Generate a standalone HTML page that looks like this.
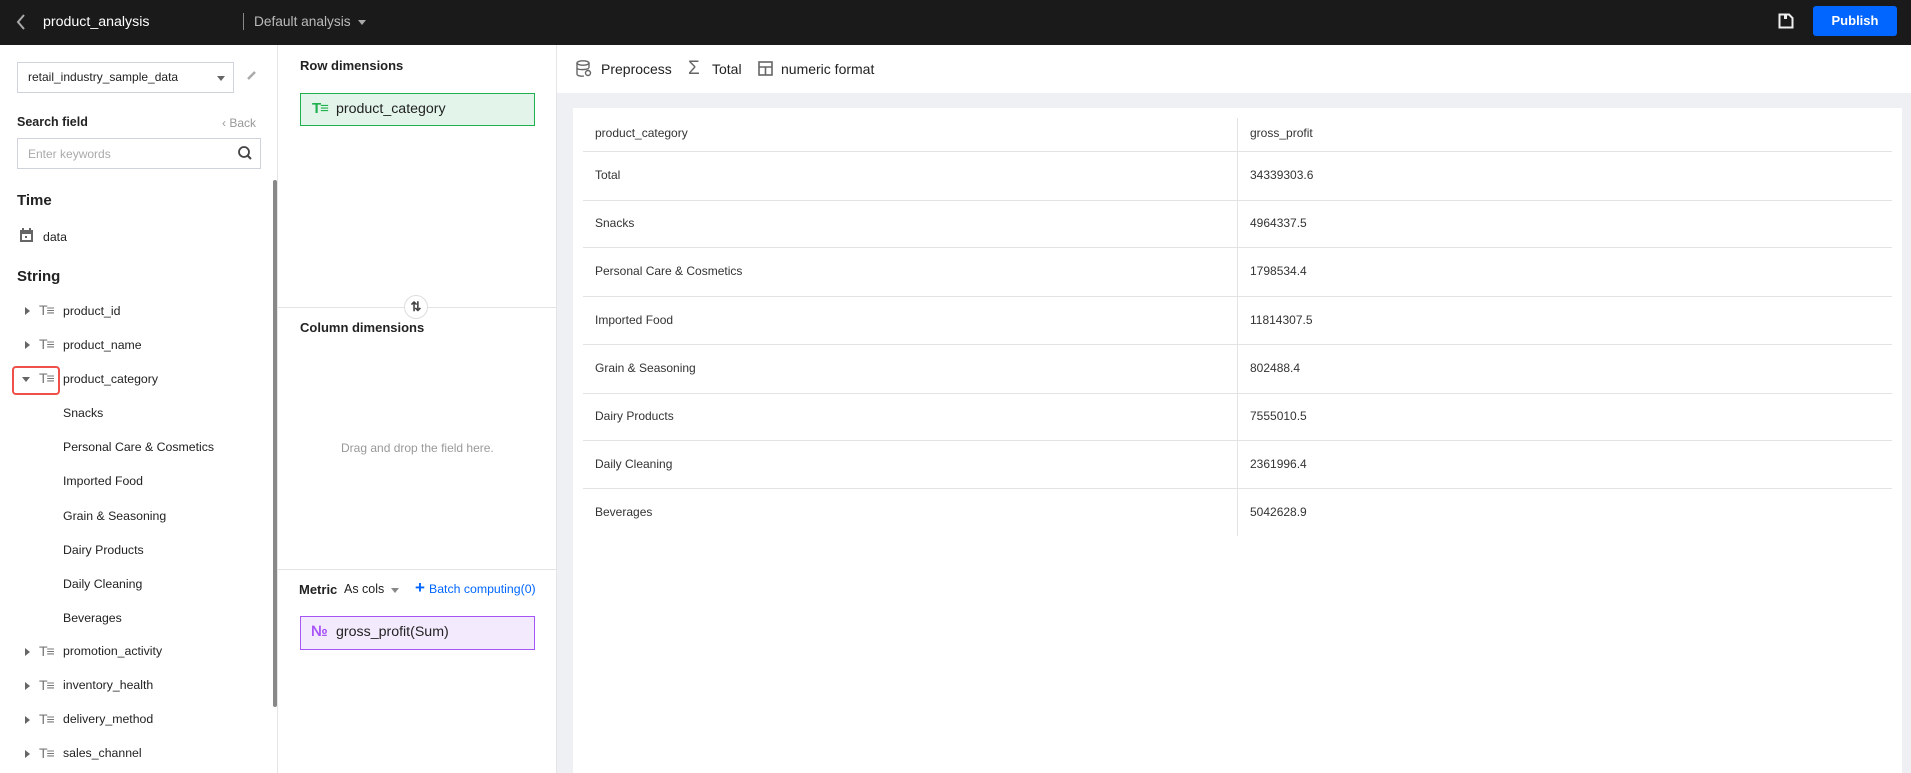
<!DOCTYPE html>
<html><head><meta charset="utf-8"><style>
*{box-sizing:border-box;margin:0;padding:0}
body{width:1911px;height:773px;overflow:hidden;font-family:"Liberation Sans",Arial,sans-serif;color:#222;background:#fff;position:relative}
.a{position:absolute;white-space:nowrap}
.hdr{left:0;top:0;width:1911px;height:45px;background:#1a1a1a}
.b{font-weight:bold}
.tri{width:0;height:0;border-top:4px solid transparent;border-bottom:4px solid transparent;border-left:5px solid #666}
.trid{width:0;height:0;border-left:4px solid transparent;border-right:4px solid transparent;border-top:5px solid #666}
.ti{font-size:14px;color:#777;letter-spacing:-1px;font-weight:normal}
.item{font-size:12.3px;color:#222}
.row{left:583px;width:1309px;height:1px;background:#e3e3e3}
.cell{font-size:12px;color:#333}
</style></head><body>
<div class="a hdr"></div>
<svg class="a" style="left:15px;top:13px" width="12" height="18"><path d="M9 2 L3 9 L9 16" stroke="#aaa" stroke-width="2" fill="none"/></svg>
<div class="a" style="left:43px;top:14px;font-size:14.2px;color:#fff">product_analysis</div>
<div class="a" style="left:243px;top:13px;width:1px;height:17px;background:#888"></div>
<div class="a" style="left:254px;top:14px;font-size:13.7px;color:#bbb">Default analysis</div>
<div class="a trid" style="left:358px;top:20px;border-top-color:#aaa"></div>
<svg class="a" style="left:1778px;top:13px" width="16" height="16"><path d="M1.5 1.5 H11 L14.5 5 V14.5 H1.5 Z" stroke="#eee" stroke-width="2" fill="none"/><rect x="6" y="2" width="3" height="4" fill="#eee"/></svg>
<div class="a b" style="left:1813px;top:6px;width:84px;height:30px;background:#0066ff;border-radius:3px;color:#fff;font-size:13px;text-align:center;line-height:30px">Publish</div>

<!-- left panel -->
<div class="a" style="left:277px;top:45px;width:1px;height:728px;background:#e5e5e5"></div>
<div class="a" style="left:17px;top:62px;width:217px;height:31px;border:1px solid #cfd3dc"></div>
<div class="a" style="left:28px;top:70px;font-size:12px">retail_industry_sample_data</div>
<div class="a trid" style="left:217px;top:76px"></div>
<svg class="a" style="left:246px;top:69px" width="12" height="12"><path d="M2 10 L9 3" stroke="#aaa" stroke-width="2.5"/></svg>
<div class="a b" style="left:17px;top:115px;font-size:12.5px">Search field</div>
<div class="a" style="left:222px;top:116px;font-size:12px;color:#999">&#8249; Back</div>
<div class="a" style="left:17px;top:138px;width:244px;height:31px;border:1px solid #cfd3dc"></div>
<div class="a" style="left:28px;top:147px;font-size:12px;color:#aaa">Enter keywords</div>
<svg class="a" style="left:237px;top:145px" width="16" height="16"><circle cx="7" cy="7" r="5" stroke="#444" stroke-width="1.8" fill="none"/><path d="M10.5 10.5 L14 14" stroke="#444" stroke-width="2"/></svg>
<div class="a b" style="left:17px;top:192px;font-size:15px">Time</div>
<svg class="a" style="left:19px;top:228px" width="15" height="15"><rect x="1" y="2" width="13" height="12" fill="#666"/><rect x="3" y="6" width="9" height="6" fill="#fff"/><rect x="6" y="8" width="2" height="2" fill="#666"/><rect x="3" y="0" width="2" height="3" fill="#666"/><rect x="10" y="0" width="2" height="3" fill="#666"/></svg>
<div class="a item" style="left:43px;top:230px">data</div>
<div class="a b" style="left:17px;top:268px;font-size:15px">String</div>

<div class="a tri" style="left:25px;top:307px"></div><div class="a ti" style="left:39px;top:302px">T&#8801;</div><div class="a item" style="left:63px;top:304px">product_id</div>
<div class="a tri" style="left:25px;top:341px"></div><div class="a ti" style="left:39px;top:336px">T&#8801;</div><div class="a item" style="left:63px;top:338px">product_name</div>
<div class="a" style="left:12px;top:366px;width:48px;height:29px;border:2px solid #f0504a;border-radius:4px"></div>
<div class="a trid" style="left:22px;top:377px"></div><div class="a ti" style="left:39px;top:370px">T&#8801;</div><div class="a item" style="left:63px;top:372px">product_category</div>
<div class="a item" style="left:63px;top:406px">Snacks</div>
<div class="a item" style="left:63px;top:440px">Personal Care &amp; Cosmetics</div>
<div class="a item" style="left:63px;top:474px">Imported Food</div>
<div class="a item" style="left:63px;top:509px">Grain &amp; Seasoning</div>
<div class="a item" style="left:63px;top:543px">Dairy Products</div>
<div class="a item" style="left:63px;top:577px">Daily Cleaning</div>
<div class="a item" style="left:63px;top:611px">Beverages</div>
<div class="a tri" style="left:25px;top:648px"></div><div class="a ti" style="left:39px;top:643px">T&#8801;</div><div class="a item" style="left:63px;top:644px">promotion_activity</div>
<div class="a tri" style="left:25px;top:682px"></div><div class="a ti" style="left:39px;top:677px">T&#8801;</div><div class="a item" style="left:63px;top:678px">inventory_health</div>
<div class="a tri" style="left:25px;top:716px"></div><div class="a ti" style="left:39px;top:711px">T&#8801;</div><div class="a item" style="left:63px;top:712px">delivery_method</div>
<div class="a tri" style="left:25px;top:750px"></div><div class="a ti" style="left:39px;top:745px">T&#8801;</div><div class="a item" style="left:63px;top:746px">sales_channel</div>
<div class="a" style="left:273px;top:180px;width:4px;height:527px;background:#888;border-radius:2px"></div>

<!-- middle -->
<div class="a" style="left:556px;top:45px;width:1px;height:728px;background:#e5e5e5"></div>
<div class="a b" style="left:300px;top:58px;font-size:13px">Row dimensions</div>
<div class="a" style="left:300px;top:93px;width:235px;height:33px;border:1px solid #1fb14e;background:#e3f5ea"></div>
<div class="a b" style="left:312px;top:100px;font-size:15px;color:#1fb14e;letter-spacing:-1px">T&#8801;</div>
<div class="a" style="left:336px;top:101px;font-size:14.2px">product_category</div>
<div class="a" style="left:278px;top:307px;width:278px;height:1px;background:#e3e3e3"></div>
<div class="a" style="left:404px;top:295px;width:24px;height:24px;border:1px solid #ddd;border-radius:50%;background:#fff;text-align:center;font-size:13px;font-weight:bold;line-height:22px;color:#444">&#8645;</div>
<div class="a b" style="left:300px;top:320px;font-size:13px">Column dimensions</div>
<div class="a" style="left:341px;top:441px;font-size:12px;color:#999">Drag and drop the field here.</div>
<div class="a" style="left:278px;top:569px;width:278px;height:1px;background:#e3e3e3"></div>
<div class="a b" style="left:299px;top:582px;font-size:13px">Metric</div>
<div class="a" style="left:344px;top:582px;font-size:12.5px">As cols</div>
<div class="a trid" style="left:391px;top:588px;border-top-color:#888"></div>
<div class="a b" style="left:415px;top:578px;font-size:17px;color:#0066ff">+</div>
<div class="a" style="left:429px;top:582px;font-size:12.3px;color:#0066ff">Batch computing(0)</div>
<div class="a" style="left:300px;top:616px;width:235px;height:34px;border:1px solid #a855f7;background:#f3eafd"></div>
<div class="a b" style="left:311px;top:623px;font-size:15px;color:#a855f7">&#8470;</div>
<div class="a" style="left:336px;top:624px;font-size:14.2px">gross_profit(Sum)</div>

<!-- right -->
<div class="a" style="left:557px;top:93px;width:1354px;height:680px;background:#eff0f4"></div>
<svg class="a" style="left:576px;top:60px" width="16" height="18"><ellipse cx="7" cy="3" rx="6" ry="2.2" stroke="#666" stroke-width="1.4" fill="none"/><path d="M1 3 V14 C1 16 6 16.5 8 16 M13 3 V8" stroke="#666" stroke-width="1.4" fill="none"/><path d="M1 8.5 C3 10 9 10 13 8.5" stroke="#666" stroke-width="1.4" fill="none"/><circle cx="12" cy="13" r="2.5" stroke="#666" stroke-width="1.4" fill="none"/></svg>
<div class="a" style="left:601px;top:61px;font-size:14px">Preprocess</div>
<div class="a" style="left:688px;top:58px;font-size:19px;color:#666">&#931;</div>
<div class="a" style="left:712px;top:61px;font-size:14px">Total</div>
<svg class="a" style="left:758px;top:61px" width="15" height="15"><rect x="1" y="1" width="13" height="13" stroke="#666" stroke-width="1.6" fill="none"/><path d="M1 6 H14 M7.5 6 V14" stroke="#666" stroke-width="1.6"/></svg>
<div class="a" style="left:781px;top:61px;font-size:14px">numeric format</div>
<div class="a" style="left:573px;top:108px;width:1329px;height:665px;background:#fff"></div>
<div class="a" style="left:1237px;top:118px;width:1px;height:418px;background:#e3e3e3"></div>
<div class="a row" style="top:151px"></div>
<div class="a row" style="top:200px"></div>
<div class="a row" style="top:247px"></div>
<div class="a row" style="top:296px"></div>
<div class="a row" style="top:344px"></div>
<div class="a row" style="top:393px"></div>
<div class="a row" style="top:440px"></div>
<div class="a row" style="top:488px"></div>
<div class="a cell" style="left:595px;top:126px">product_category</div><div class="a cell" style="left:1250px;top:126px">gross_profit</div>
<div class="a cell" style="left:595px;top:168px">Total</div><div class="a cell" style="left:1250px;top:168px">34339303.6</div>
<div class="a cell" style="left:595px;top:216px">Snacks</div><div class="a cell" style="left:1250px;top:216px">4964337.5</div>
<div class="a cell" style="left:595px;top:264px">Personal Care &amp; Cosmetics</div><div class="a cell" style="left:1250px;top:264px">1798534.4</div>
<div class="a cell" style="left:595px;top:313px">Imported Food</div><div class="a cell" style="left:1250px;top:313px">11814307.5</div>
<div class="a cell" style="left:595px;top:361px">Grain &amp; Seasoning</div><div class="a cell" style="left:1250px;top:361px">802488.4</div>
<div class="a cell" style="left:595px;top:409px">Dairy Products</div><div class="a cell" style="left:1250px;top:409px">7555010.5</div>
<div class="a cell" style="left:595px;top:457px">Daily Cleaning</div><div class="a cell" style="left:1250px;top:457px">2361996.4</div>
<div class="a cell" style="left:595px;top:505px">Beverages</div><div class="a cell" style="left:1250px;top:505px">5042628.9</div>
</body></html>
